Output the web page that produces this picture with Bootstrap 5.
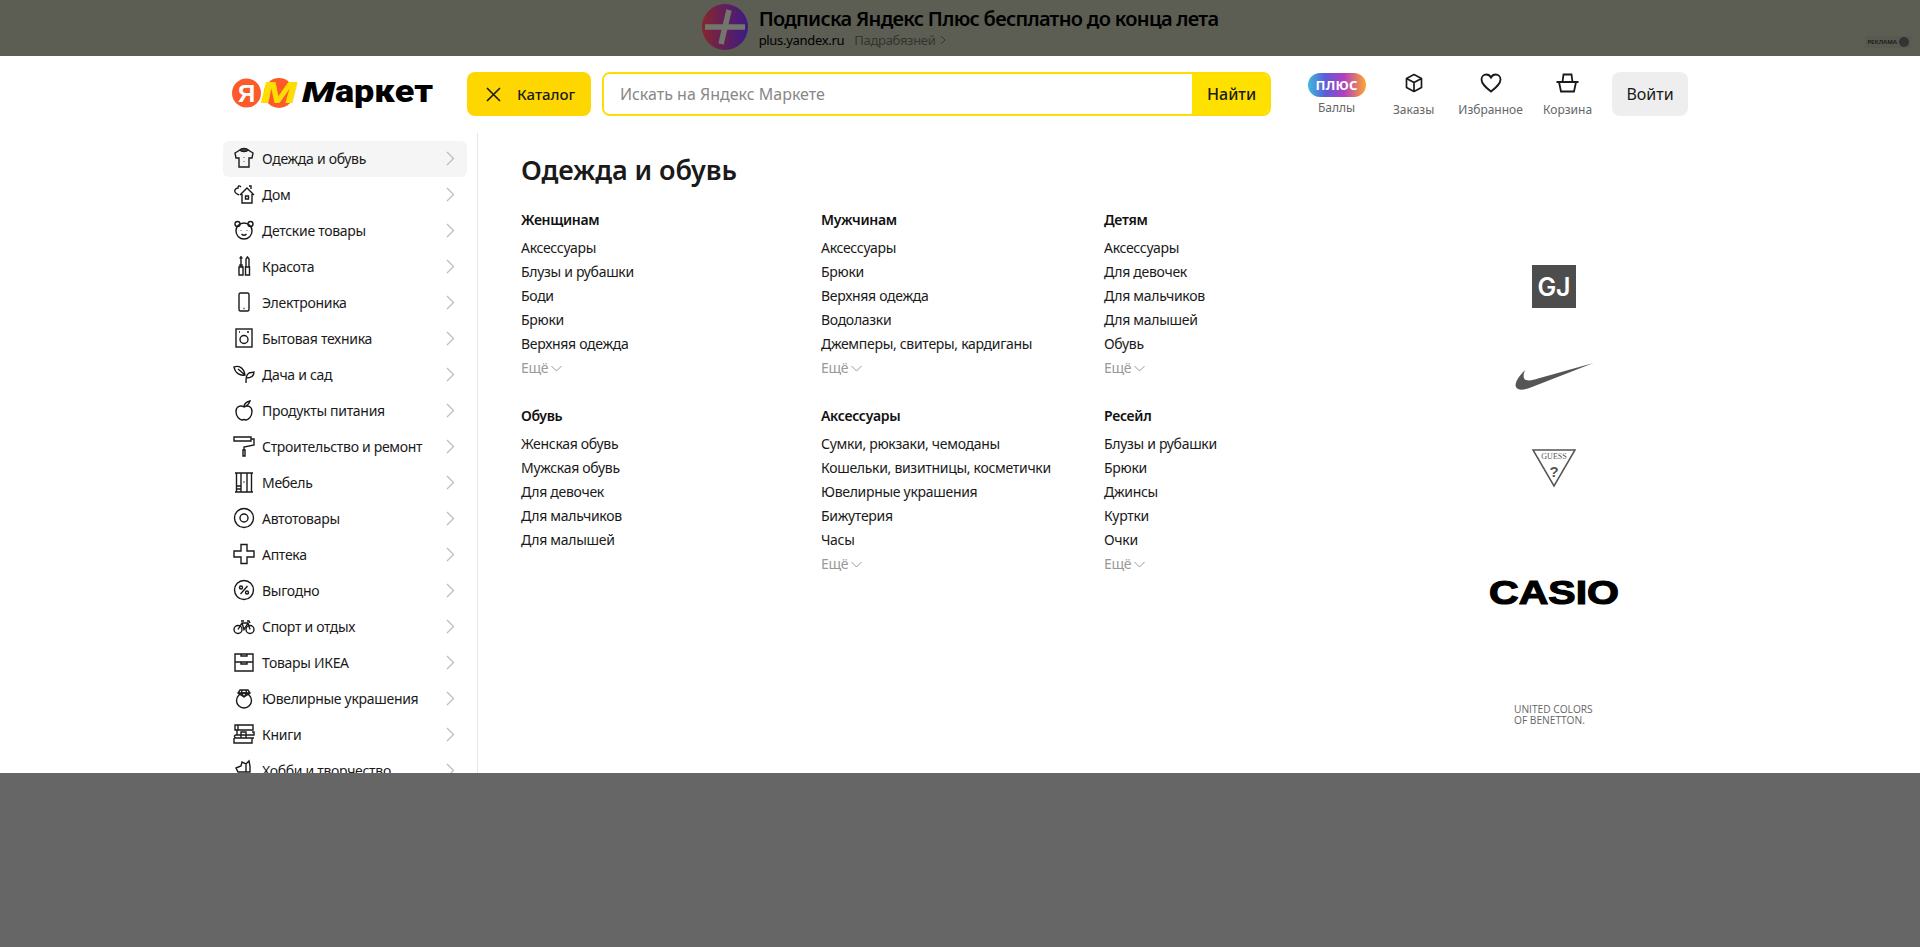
<!DOCTYPE html>
<html lang="ru">
<head>
<meta charset="UTF-8">
<meta name="viewport" content="width=device-width, initial-scale=1.0">
<title>Яндекс Маркет</title>
<link rel="stylesheet" href="https://cdn.jsdelivr.net/npm/bootstrap@5.3.0/dist/css/bootstrap.min.css">
<style>
body { font-family: "Noto Sans", "Liberation Sans", sans-serif; font-size: 14px; letter-spacing: -.3px; color: #1a1a1a; background: #666; overflow: hidden; }
a { color: inherit; text-decoration: none; }
.sheet { height: 773px; background: #fff; overflow: hidden; }
.promo { height: 56px; background: #5c5d53; color: #000; }
.promo-circle { width: 46px; height: 46px; border-radius: 50%; background: linear-gradient(90deg, #86262f, #3c1a86); margin-right: 11px; }
.promo-title { font-size: 20px; font-weight: 600; line-height: 26px; margin-top: 6px; letter-spacing: -.7px; }
.promo-sub { font-size: 13px; line-height: 16px; }
.promo-more { color: #33352f; margin-left: 10px; }
.promo-ad { right: 9px; top: 36px; font-size: 6px; line-height: 12px; font-weight: 700; letter-spacing: 0; color: #222; background: #58594f; padding: 0 2px; }
.promo-ad i { width: 10px; height: 10px; border-radius: 50%; background: #333; margin-left: 2px; }
.head-row { height: 77px; padding: 16px 232px 0; letter-spacing: 0; }
.brand { width: 203px; height: 30px; margin: 6px 32px 0 0; }
.brand svg { overflow: visible; }
.cat-btn { width: 124px; height: 44px; background: #fed700; border: 0; border-radius: 8px; font-size: 15px; font-weight: 500; color: #1a1a1a; padding: 0 0 0 19px; gap: 16px; }
.search-box { width: 670px; height: 44px; margin-left: 11px; border: 2px solid #fedd00; border-radius: 8px; overflow: hidden; }
.search-box input { border: 0; border-radius: 0; height: 40px; padding: 0 16px; font-size: 16px; box-shadow: none; }
.search-box input::placeholder { color: #888; }
.find-btn { width: 79px; border: 0; border-radius: 0; background: #ffe100; color: #1a1a1a; font-size: 16px; font-weight: 500; flex: none; margin: -2px -2px -2px 0; height: 44px; padding: 0; }
.top-items { margin-left: 27px; }
.top-item { width: 77px; font-size: 12px; line-height: 16px; color: #666; }
.top-item svg { height: 20px; margin: 1px 0 9px; }
.plus-pill { width: 58px; height: 24px; border-radius: 12px; margin: 1px 0 3px; color: #fff; font-size: 13px; font-weight: 700; line-height: 24px; letter-spacing: .3px; background: linear-gradient(90deg, #3dbbdc, #5d5bd8 30%, #b03fc0 62%, #ffa62e); }
.login-btn { width: 76px; height: 44px; margin-left: 6px; background: #eee; border: 0; border-radius: 8px; font-size: 16px; color: #1a1a1a; padding: 0; }
.body-row { padding: 0 232px 0 223px; height: 640px; }
.side { width: 255px; padding: 8px 10px 0 0; border-right: 1px solid #e6e6e6; flex: none; }
.side-item { height: 36px; padding: 0 12px 2px 10px; border-radius: 6px; color: #1a1a1a; }
.side-item.on { background: #f5f5f5; }
.side-item svg.ic { width: 22px; height: 22px; margin-right: 7px; flex: none; fill: none; stroke: #1a1a1a; stroke-width: 1.4; }
.side-item svg.go { margin-left: auto; }
.menu-main { padding: 18px 0 0 43px; }
.menu-main h1 { font-size: 27px; font-weight: 600; line-height: 38px; margin: 0 0 19px; color: #1a1a1a; letter-spacing: -.1px; }
.menu-grid { width: 636px; display: grid; grid-template-columns: 300px 283px 1fr; row-gap: 24px; }
.menu-hd { font-weight: 600; line-height: 24px; margin-bottom: 4px; color: #111; }
.menu-link { display: block; line-height: 24px; white-space: nowrap; }
.menu-more { line-height: 24px; color: #999; gap: 3px; }
.brands { width: 130px; margin-left: auto; margin-right: 69px; letter-spacing: 0; }
.brands svg { overflow: visible; }
svg text { font-family: "Liberation Sans", sans-serif; letter-spacing: 0; }
svg text.serif-word { font-family: "Liberation Serif", serif; }
svg text.logo-word { font-family: Roboto, sans-serif; }
svg text.gj-word { font-family: Inter, sans-serif; }
.brand-gj { margin-top: 132px; }
.brand-nike { margin-top: 54px; }
.brand-guess { margin-top: 57px; }
.brand-casio { margin-top: 92px; }
.brand-ben { margin-top: 99px; width: 80px; font-family: "Open Sans", sans-serif; font-size: 10.2px; line-height: 11px; color: #666; white-space: nowrap; }
</style>
</head>
<body>
<div class="sheet">
  <div class="promo position-relative d-flex justify-content-center">
    <div class="d-flex">
      <div class="promo-circle mt-1 d-flex align-items-center justify-content-center">
        <svg width="46" height="46" viewBox="0 0 46 46"><path d="M3 23h40M27 6 19 40" stroke="#74756c" stroke-width="5.5" fill="none"/></svg>
      </div>
      <div>
        <div class="promo-title">Подписка Яндекс Плюс бесплатно до конца лета</div>
        <div class="promo-sub d-flex align-items-center">plus.yandex.ru<span class="promo-more">Падрабязней</span>
          <svg class="ms-1" width="6" height="10" viewBox="0 0 6 10"><path d="m1 1 4 4-4 4" stroke="#33352f" fill="none"/></svg>
        </div>
      </div>
    </div>
    <div class="promo-ad position-absolute d-flex align-items-center">РЕКЛАМА<i class="d-block"></i></div>
  </div>

  <div class="head-row d-flex align-items-start">
    <a href="#" class="brand d-block">
      <svg width="203" height="30" viewBox="0 0 203 30">
        <circle cx="14.5" cy="15" r="14.5" fill="#fc5a29"/>
        <text x="14.5" y="24" font-size="24" font-weight="700" fill="#fff" text-anchor="middle">Я</text>
        <circle cx="47" cy="15" r="15" fill="#fc5a29"/>
        <text class="logo-word" x="29" y="25" font-size="30" font-weight="900" font-style="italic" fill="#ffdd00" textLength="36" lengthAdjust="spacingAndGlyphs">М</text>
        <text class="logo-word" x="70" y="24" font-size="28" font-weight="900" font-style="italic" fill="#000" textLength="33" lengthAdjust="spacingAndGlyphs">М</text>
        <text class="logo-word" x="103" y="24" font-size="31" font-weight="900" fill="#000" textLength="98" lengthAdjust="spacingAndGlyphs">аркет</text>
      </svg>
    </a>
    <button class="cat-btn btn d-flex align-items-center" type="button">
      <svg width="15" height="15" viewBox="0 0 15 15"><path d="m1 1 13 13M14 1 1 14" stroke="#1a1a1a" stroke-width="1.6" fill="none"/></svg>
      Каталог
    </button>
    <div class="search-box d-flex">
      <input class="form-control" type="text" placeholder="Искать на Яндекс Маркете">
      <button class="find-btn btn" type="button">Найти</button>
    </div>
    <div class="top-items d-flex">
      <a href="#" class="top-item text-center d-flex flex-column align-items-center">
        <span class="plus-pill d-block">ПЛЮС</span>Баллы
      </a>
      <a href="#" class="top-item text-center d-flex flex-column align-items-center">
        <svg width="20" height="20" viewBox="0 0 20 20"><path d="M10 1.5 17.5 5.5v9L10 18.5 2.5 14.5v-9zM2.5 5.500 10 9.500l7.500-4M10 9.500v9" fill="none" stroke="#1a1a1a" stroke-width="1.7" stroke-linejoin="round"/></svg>Заказы
      </a>
      <a href="#" class="top-item text-center d-flex flex-column align-items-center">
        <svg width="22" height="20" viewBox="0 0 22 20"><path d="M11 18.500C6 14.500 1.500 11 1.500 6.500 1.500 3.500 3.800 1.500 6.300 1.500c2 0 3.700 1 4.700 3 1-2 2.700-3 4.700-3 2.500 0 4.800 2 4.800 5 0 4.500-4.500 8-9.500 12z" fill="none" stroke="#1a1a1a" stroke-width="1.8"/></svg>Избранное
      </a>
      <a href="#" class="top-item text-center d-flex flex-column align-items-center">
        <svg width="23" height="20" viewBox="0 0 23 20"><path d="M.5 9h22M3 9l2 9.500h13L20 9M6.500 9l1-7.500h8l1 7.500" fill="none" stroke="#1a1a1a" stroke-width="1.8"/></svg>Корзина
      </a>
    </div>
    <button class="login-btn btn" type="button">Войти</button>
  </div>

  <div class="body-row d-flex">
    <nav class="side">
      <a href="#" class="side-item on d-flex align-items-center">
        <svg class="ic" viewBox="0 0 22 22"><path d="M7 3 2 6l1 5h3v9h10v-9h3l1-5-5-3z"/><path d="M7 3c1-2 7-2 8 0-1 2-7 2-8 0zM11 10v.5M11 14v.5"/></svg>
        Одежда и обувь
        <svg class="go" width="9" height="15" viewBox="0 0 9 15"><path d="m1 1 6.5 6.5L1 14" fill="none" stroke="#bbb" stroke-width="1.2"/></svg>
      </a>
      <a href="#" class="side-item d-flex align-items-center">
        <svg class="ic" viewBox="0 0 22 22"><path d="M7 12 14 5l7 7M9 11v9h10v-9M12.500 13h3v3h-3zM16 3h2v3M8 4C6 2 5 3 5 5 3 5 1 7 2 9c1 2 2 2 4 3"/></svg>
        Дом
        <svg class="go" width="9" height="15" viewBox="0 0 9 15"><path d="m1 1 6.5 6.5L1 14" fill="none" stroke="#bbb" stroke-width="1.2"/></svg>
      </a>
      <a href="#" class="side-item d-flex align-items-center">
        <svg class="ic" viewBox="0 0 22 22"><circle cx="11" cy="12" r="8"/><circle cx="4.500" cy="5" r="2.500"/><circle cx="17.500" cy="5" r="2.500"/><path d="M8 11v.5M14 11v.5M8.500 15c1.500 1.500 3.500 1.500 5 0"/></svg>
        Детские товары
        <svg class="go" width="9" height="15" viewBox="0 0 9 15"><path d="m1 1 6.5 6.5L1 14" fill="none" stroke="#bbb" stroke-width="1.2"/></svg>
      </a>
      <a href="#" class="side-item d-flex align-items-center">
        <svg class="ic" viewBox="0 0 22 22"><path d="M8 1v9M6.500 3h3M6 12h4v8H6zM7 12v-2h2v2M13 12V4l1.500-2L16 4v8M12.500 12H16.500v8h-4z"/></svg>
        Красота
        <svg class="go" width="9" height="15" viewBox="0 0 9 15"><path d="m1 1 6.5 6.5L1 14" fill="none" stroke="#bbb" stroke-width="1.2"/></svg>
      </a>
      <a href="#" class="side-item d-flex align-items-center">
        <svg class="ic" viewBox="0 0 22 22"><rect x="6" y="2" width="10" height="18" rx="1.500"/><path d="M10.500 17.500h1"/></svg>
        Электроника
        <svg class="go" width="9" height="15" viewBox="0 0 9 15"><path d="m1 1 6.5 6.5L1 14" fill="none" stroke="#bbb" stroke-width="1.2"/></svg>
      </a>
      <a href="#" class="side-item d-flex align-items-center">
        <svg class="ic" viewBox="0 0 22 22"><rect x="3" y="2" width="16" height="18"/><circle cx="11" cy="12.500" r="4"/><path d="M6 5h1M14 5h2"/></svg>
        Бытовая техника
        <svg class="go" width="9" height="15" viewBox="0 0 9 15"><path d="m1 1 6.5 6.5L1 14" fill="none" stroke="#bbb" stroke-width="1.2"/></svg>
      </a>
      <a href="#" class="side-item d-flex align-items-center">
        <svg class="ic" viewBox="0 0 22 22"><path d="M1 4c5-2 10 1 11 8C7 13 2 10 1 4zM5 6l7 6M13 20c0-5 0-8 3-10l5-1c0 3-2 6-8 6"/></svg>
        Дача и сад
        <svg class="go" width="9" height="15" viewBox="0 0 9 15"><path d="m1 1 6.5 6.5L1 14" fill="none" stroke="#bbb" stroke-width="1.2"/></svg>
      </a>
      <a href="#" class="side-item d-flex align-items-center">
        <svg class="ic" viewBox="0 0 22 22"><path d="M11 8C8 6 3 7 3 12.500S7 21 9 21c1 0 1-.5 2-.5s1 .5 2 .5c2 0 6-3 6-8.500S14 6 11 8zM11 8c0-3 2-5 6-6-1 3-3 5-6 6"/></svg>
        Продукты питания
        <svg class="go" width="9" height="15" viewBox="0 0 9 15"><path d="m1 1 6.5 6.5L1 14" fill="none" stroke="#bbb" stroke-width="1.2"/></svg>
      </a>
      <a href="#" class="side-item d-flex align-items-center">
        <svg class="ic" viewBox="0 0 22 22"><path d="M1 2h17v4H1zM18 4h3v6l-10 2v3M10 15h2v6h-2z"/></svg>
        Строительство и ремонт
        <svg class="go" width="9" height="15" viewBox="0 0 9 15"><path d="m1 1 6.5 6.5L1 14" fill="none" stroke="#bbb" stroke-width="1.2"/></svg>
      </a>
      <a href="#" class="side-item d-flex align-items-center">
        <svg class="ic" viewBox="0 0 22 22"><path d="M2 2h18M2 21h18M3.500 2v19M8 2v19M14 2v19M18.500 2v19M3.500 15H8M3.500 18H8M10.500 11h1"/></svg>
        Мебель
        <svg class="go" width="9" height="15" viewBox="0 0 9 15"><path d="m1 1 6.5 6.5L1 14" fill="none" stroke="#bbb" stroke-width="1.2"/></svg>
      </a>
      <a href="#" class="side-item d-flex align-items-center">
        <svg class="ic" viewBox="0 0 22 22"><circle cx="11" cy="11" r="9.500"/><circle cx="11" cy="11" r="4"/></svg>
        Автотовары
        <svg class="go" width="9" height="15" viewBox="0 0 9 15"><path d="m1 1 6.5 6.5L1 14" fill="none" stroke="#bbb" stroke-width="1.2"/></svg>
      </a>
      <a href="#" class="side-item d-flex align-items-center">
        <svg class="ic" viewBox="0 0 22 22"><path d="M8 1.500h6V8h7v6h-7v6.500H8V14H1V8h7z"/></svg>
        Аптека
        <svg class="go" width="9" height="15" viewBox="0 0 9 15"><path d="m1 1 6.5 6.5L1 14" fill="none" stroke="#bbb" stroke-width="1.2"/></svg>
      </a>
      <a href="#" class="side-item d-flex align-items-center">
        <svg class="ic" viewBox="0 0 22 22"><circle cx="11" cy="11" r="9.500"/><circle cx="8" cy="8.500" r="1.500"/><circle cx="14" cy="13.500" r="1.500"/><path d="M14.500 7 7.500 15"/></svg>
        Выгодно
        <svg class="go" width="9" height="15" viewBox="0 0 9 15"><path d="m1 1 6.5 6.5L1 14" fill="none" stroke="#bbb" stroke-width="1.2"/></svg>
      </a>
      <a href="#" class="side-item d-flex align-items-center">
        <svg class="ic" viewBox="0 0 22 22"><circle cx="5" cy="14.500" r="4"/><circle cx="17" cy="14.500" r="4"/><path d="M5 14.500 9 8h6l2 6.500M9 8l2 6.500L15 8M8 6h3M14 6h2l1 2"/></svg>
        Спорт и отдых
        <svg class="go" width="9" height="15" viewBox="0 0 9 15"><path d="m1 1 6.5 6.5L1 14" fill="none" stroke="#bbb" stroke-width="1.2"/></svg>
      </a>
      <a href="#" class="side-item d-flex align-items-center">
        <svg class="ic" viewBox="0 0 22 22"><path d="M2 3h18v17H2zM2 11h18M8 3v2h6V3M8 11v2h6v-2"/></svg>
        Товары ИКЕА
        <svg class="go" width="9" height="15" viewBox="0 0 9 15"><path d="m1 1 6.5 6.5L1 14" fill="none" stroke="#bbb" stroke-width="1.2"/></svg>
      </a>
      <a href="#" class="side-item d-flex align-items-center">
        <svg class="ic" viewBox="0 0 22 22"><circle cx="11" cy="13.500" r="7.500"/><path d="M7 3h8l2 3-6 4-6-4zM5 6h12M9 3 8.500 6l2.500 4 2.500-4L13 3"/></svg>
        Ювелирные украшения
        <svg class="go" width="9" height="15" viewBox="0 0 9 15"><path d="m1 1 6.5 6.5L1 14" fill="none" stroke="#bbb" stroke-width="1.2"/></svg>
      </a>
      <a href="#" class="side-item d-flex align-items-center">
        <svg class="ic" viewBox="0 0 22 22"><path d="M2 2h18v5H2zM4 7v5M19 9h2v3H3M3 12c-2 0-2 3 0 3M3 15h18M1 15v5h18v-5M8 9h5v6H8zM5 2v5"/></svg>
        Книги
        <svg class="go" width="9" height="15" viewBox="0 0 9 15"><path d="m1 1 6.5 6.5L1 14" fill="none" stroke="#bbb" stroke-width="1.2"/></svg>
      </a>
      <a href="#" class="side-item d-flex align-items-center">
        <svg class="ic" viewBox="0 0 22 22"><path d="M3 9l5-2 1-4 4 2 3-3 1 5v6H5zM13 5v8"/></svg>
        Хобби и творчество
        <svg class="go" width="9" height="15" viewBox="0 0 9 15"><path d="m1 1 6.5 6.5L1 14" fill="none" stroke="#bbb" stroke-width="1.2"/></svg>
      </a>
    </nav>

    <main class="menu-main">
      <h1>Одежда и обувь</h1>
      <div class="menu-grid">
        <div>
          <div class="menu-hd">Женщинам</div>
          <a href="#" class="menu-link">Аксессуары</a>
          <a href="#" class="menu-link">Блузы и рубашки</a>
          <a href="#" class="menu-link">Боди</a>
          <a href="#" class="menu-link">Брюки</a>
          <a href="#" class="menu-link">Верхняя одежда</a>
          <a href="#" class="menu-more d-flex align-items-center">Ещё<svg width="11" height="7" viewBox="0 0 11 7"><path d="m.5 1 5 5 5-5" fill="none" stroke="#999"/></svg></a>
        </div>
        <div>
          <div class="menu-hd">Мужчинам</div>
          <a href="#" class="menu-link">Аксессуары</a>
          <a href="#" class="menu-link">Брюки</a>
          <a href="#" class="menu-link">Верхняя одежда</a>
          <a href="#" class="menu-link">Водолазки</a>
          <a href="#" class="menu-link">Джемперы, свитеры, кардиганы</a>
          <a href="#" class="menu-more d-flex align-items-center">Ещё<svg width="11" height="7" viewBox="0 0 11 7"><path d="m.5 1 5 5 5-5" fill="none" stroke="#999"/></svg></a>
        </div>
        <div>
          <div class="menu-hd">Детям</div>
          <a href="#" class="menu-link">Аксессуары</a>
          <a href="#" class="menu-link">Для девочек</a>
          <a href="#" class="menu-link">Для мальчиков</a>
          <a href="#" class="menu-link">Для малышей</a>
          <a href="#" class="menu-link">Обувь</a>
          <a href="#" class="menu-more d-flex align-items-center">Ещё<svg width="11" height="7" viewBox="0 0 11 7"><path d="m.5 1 5 5 5-5" fill="none" stroke="#999"/></svg></a>
        </div>
        <div>
          <div class="menu-hd">Обувь</div>
          <a href="#" class="menu-link">Женская обувь</a>
          <a href="#" class="menu-link">Мужская обувь</a>
          <a href="#" class="menu-link">Для девочек</a>
          <a href="#" class="menu-link">Для мальчиков</a>
          <a href="#" class="menu-link">Для малышей</a>
        </div>
        <div>
          <div class="menu-hd">Аксессуары</div>
          <a href="#" class="menu-link">Сумки, рюкзаки, чемоданы</a>
          <a href="#" class="menu-link">Кошельки, визитницы, косметички</a>
          <a href="#" class="menu-link">Ювелирные украшения</a>
          <a href="#" class="menu-link">Бижутерия</a>
          <a href="#" class="menu-link">Часы</a>
          <a href="#" class="menu-more d-flex align-items-center">Ещё<svg width="11" height="7" viewBox="0 0 11 7"><path d="m.5 1 5 5 5-5" fill="none" stroke="#999"/></svg></a>
        </div>
        <div>
          <div class="menu-hd">Ресейл</div>
          <a href="#" class="menu-link">Блузы и рубашки</a>
          <a href="#" class="menu-link">Брюки</a>
          <a href="#" class="menu-link">Джинсы</a>
          <a href="#" class="menu-link">Куртки</a>
          <a href="#" class="menu-link">Очки</a>
          <a href="#" class="menu-more d-flex align-items-center">Ещё<svg width="11" height="7" viewBox="0 0 11 7"><path d="m.5 1 5 5 5-5" fill="none" stroke="#999"/></svg></a>
        </div>
      </div>
    </main>

    <aside class="brands d-flex flex-column align-items-center">
      <svg class="brand-gj" width="44" height="43" viewBox="0 0 44 43">
        <rect width="44" height="43" fill="#4d4d4d"/>
        <text class="gj-word" x="22" y="30.500" font-size="25" font-weight="600" fill="#fff" text-anchor="middle">GJ</text>
      </svg>
      <svg class="brand-nike" width="79" height="30" viewBox="0 0 79 30">
        <path d="M78.500 1 17 25C10 28 3 29 1 25c-1.500-3 1-9 9-17C8 13 8 17 11 18c3 1 8 0 12-1.500z" fill="#555"/>
      </svg>
      <svg class="brand-guess" width="44" height="38" viewBox="0 0 44 38">
        <path d="M1 1h42L22 37z" fill="#fff" stroke="#555" stroke-width="1.500"/>
        <text class="serif-word" x="22" y="10" font-size="8" fill="#555" text-anchor="middle">GUESS</text>
        <text x="22" y="28" font-size="15" font-weight="700" fill="#555" text-anchor="middle">?</text>
      </svg>
      <svg class="brand-casio" width="130" height="26" viewBox="0 0 130 26">
        <text x="0" y="24.500" font-size="34" font-weight="700" fill="#000" stroke="#000" stroke-width="1.200" textLength="130" lengthAdjust="spacingAndGlyphs">CASIO</text>
      </svg>
      <div class="brand-ben">UNITED COLORS<br>OF BENETTON.</div>
    </aside>
  </div>
</div>
</body>
</html>
